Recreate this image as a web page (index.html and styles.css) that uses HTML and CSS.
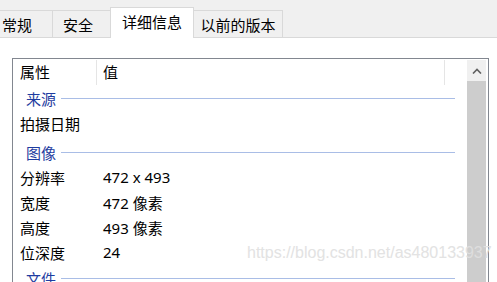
FILE: index.html
```html
<!DOCTYPE html>
<html lang="zh-CN">
<head>
    <meta charset="utf-8">
    <link rel="stylesheet" href="styles.css">
</head>
<body>
<div id="window">
    <div class="tabbar">
        <div class="tab tab-first">常规</div>
        <div class="tab tab-second">安全</div>
        <div class="tab tab-active">详细信息</div>
        <div class="tab tab-last">以前的版本</div>
    </div>
    <div class="page">
        <div class="listbox">
            <div class="list">
                <div class="row header">
                    <div class="col-name">属性</div>
                    <div class="col-value">值</div>
                    <div class="col-extra"></div>
                </div>
                <div class="group g1"><span>来源</span><i></i></div>
                <div class="row item r-date"><div class="col-name">拍摄日期</div><div class="col-value"></div></div>
                <div class="group g2"><span>图像</span><i></i></div>
                <div class="row item"><div class="col-name">分辨率</div><div class="col-value">472 x 493</div></div>
                <div class="row item"><div class="col-name">宽度</div><div class="col-value">472 像素</div></div>
                <div class="row item"><div class="col-name">高度</div><div class="col-value">493 像素</div></div>
                <div class="row item"><div class="col-name">位深度</div><div class="col-value">24</div></div>
                <div class="group g3"><span>文件</span><i></i></div>
            </div>
            <div class="scrollbar">
                <div class="scroll-up">
                    <svg width="10" height="6" viewBox="0 0 10 6">
                        <path d="M1 5.5 L5 1.5 L9 5.5" fill="none" stroke="#606060" stroke-width="1.6"/>
                    </svg>
                </div>
                <div class="scroll-thumb"></div>
            </div>
        </div>
    </div>
    <div class="watermark">https://blog.csdn.net/as480133937</div>
</div>
</body>
</html>
```

FILE: styles.css
```css
html, body {
    margin: 0;
    padding: 0;
    background: #ffffff;
}

#window {
    position: relative;
    width: 497px;
    height: 282px;
    overflow: hidden;
    font-family: "Noto Sans", "Noto Sans CJK SC", sans-serif;
    font-size: 15px;
    color: #000000;
}

/* tab strip */
.tabbar {
    display: flex;
    align-items: flex-end;
    height: 37px;
    background: #f0f0f0;
    border-bottom: 1px solid #d9d9d9;
}

.tab {
    box-sizing: border-box;
    height: 27px;
    border: 1px solid #d9d9d9;
    border-bottom: none;
    display: flex;
    justify-content: center;
    align-items: center;
    padding-top: 2px;
    margin-left: -1px;
    line-height: 1;
}

.tab-first {
    margin-left: -19px;
    width: 72px;
}

.tab-second {
    width: 59px;
    padding-right: 7px;
}

.tab-active {
    width: 84px;
    height: 31px;
    margin-bottom: -1px;
    background: #ffffff;
    padding-top: 0;
    padding-bottom: 2px;
    position: relative;
}

.tab-last {
    width: 89px;
    margin-left: 0;
    border-left: none;
}

/* details list */
.page {
    padding: 20px 0 0 12px;
}

.listbox {
    box-sizing: border-box;
    width: 477px;
    height: 240px;
    border: 1px solid #828790;
    display: flex;
}

.list {
    flex: 1;
    display: flex;
    flex-direction: column;
}

.row {
    display: flex;
    align-items: center;
}

.header {
    height: 27px;
}

.header .col-name,
.header .col-value {
    height: 25px;
    padding-bottom: 2px;
    border-right: 1px solid #e5e5e5;
}

.col-name {
    box-sizing: border-box;
    width: 84px;
    padding-left: 7px;
    display: flex;
    align-items: center;
}

.col-value {
    box-sizing: border-box;
    width: 348px;
    padding-left: 6px;
    display: flex;
    align-items: center;
}

.item {
    box-sizing: border-box;
    height: 25px;
    padding-bottom: 3px;
}

.r-date {
    height: 28px;
}

.group {
    display: flex;
    align-items: center;
    height: 25px;
    padding-left: 13px;
    padding-right: 12px;
    color: #1e3ca0;
}

.g2 {
    height: 27px;
}

.group span {
    margin-right: 5px;
    margin-top: -1px;
}

.group i {
    flex: 1;
    height: 1px;
    background: #a9bde6;
}

/* scroll bar */
.scrollbar {
    width: 19px;
    margin: 1px 2px 0 0;
    display: flex;
    flex-direction: column;
}

.scroll-up {
    height: 21px;
    background: #f0f0f0;
    display: flex;
    justify-content: center;
    align-items: center;
}

.scroll-thumb {
    flex: 1;
    background: #cdcdcd;
}

/* image watermark laid over the picture */
.watermark {
    position: absolute;
    left: 247px;
    top: 244px;
    font-family: "Liberation Sans", Arial, sans-serif;
    font-size: 16px;
    color: #e0e0e0;
    opacity: 0.9;
    white-space: nowrap;
}
```
